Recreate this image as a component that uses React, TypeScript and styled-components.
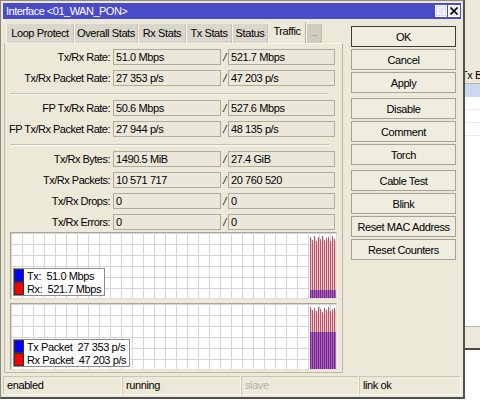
import React from "react";
import styled, { createGlobalStyle } from "styled-components";

const GlobalStyle = createGlobalStyle`
  html, body {
    margin: 0;
    padding: 0;
    background: #ffffff;
  }
  body {
    font-family: "Liberation Sans", Arial, sans-serif;
    font-size: 11px;
    letter-spacing: -0.4px;
    color: #000;
  }
`;

const panelBg = "#ece9d8";

const Desktop = styled.div`
  position: relative;
  width: 480px;
  height: 415px;
  overflow: hidden;
  background: #fff;
`;

/* window behind, only a strip shows on the right */
const BackWindow = styled.div`
  position: absolute;
  left: 330px;
  top: 0;
  width: 150px;
  height: 350px;
  box-sizing: border-box;
  background: ${panelBg};
  border-bottom: 2px solid #4a4a4a;
  display: flex;
  flex-direction: column;
`;

const BackTop = styled.div`
  height: 67px;
`;

const ListHeader = styled.div`
  height: 16px;
  line-height: 16px;
  padding-left: 131px;
  border-bottom: 1px solid #b8b5a8;
  white-space: nowrap;
  overflow: hidden;
`;

const ListRow = styled.div<{ $selected?: boolean }>`
  height: 12px;
  background: ${(p) => (p.$selected ? "#c9d9f2" : "#fff")};
  border-bottom: 1px solid ${(p) => (p.$selected ? "#c9d9f2" : "#ececec")};
`;

const ListFill = styled.div`
  flex: 1;
  background: #fff;
`;

const BackFooter = styled.div`
  height: 21px;
  border-top: 1px solid #b8b5a8;
`;

const Window = styled.div`
  position: absolute;
  left: 0;
  top: 0;
  width: 465px;
  height: 399px;
  box-sizing: border-box;
  background: ${panelBg};
  border: 1px solid #8a8880;
  border-right: 2px solid #505050;
  border-bottom: 2px solid #505050;
  padding: 2px;
  display: flex;
  flex-direction: column;
`;

const TitleBar = styled.div`
  flex-shrink: 0;
  height: 16px;
  background: #4a4bc6;
  color: #fff;
  display: flex;
  align-items: center;
  justify-content: space-between;
  padding: 0 1px 0 3px;
`;

const TitleText = styled.span`
  letter-spacing: -0.5px;
`;

const TitleButtons = styled.div`
  display: flex;
  gap: 1px;
`;

const TitleButton = styled.div<{ $close?: boolean }>`
  width: 12px;
  height: 12px;
  box-sizing: border-box;
  background: ${(p) => (p.$close ? "#f2f2f2" : "#d6d6e4")};
  border: 1px solid #fff;
  display: flex;
  align-items: center;
  justify-content: center;
`;

const MaxSquare = styled.div`
  width: 8px;
  height: 8px;
  box-sizing: border-box;
  border: 1px solid #fff;
  background: #e8e8f0;
`;

const Body = styled.div`
  display: flex;
  margin-top: 3px;
  flex: 1;
  min-height: 0;
`;

const LeftPane = styled.div`
  width: 339px;
  margin-left: 1px;
  display: flex;
  flex-direction: column;
`;

const TabStrip = styled.div`
  flex-shrink: 0;
  display: flex;
  align-items: flex-end;
  height: 21px;
  padding-left: 2px;
`;

const Tab = styled.div<{ $w: number; $active?: boolean; $more?: boolean }>`
  width: ${(p) => p.$w}px;
  box-sizing: border-box;
  height: ${(p) => (p.$active ? 21 : 19)}px;
  line-height: 19px;
  text-align: center;
  background: ${(p) => (p.$active ? panelBg : p.$more ? "#cfccc0" : "#d9d6cb")};
  border-left: 1px solid #f4f3ec;
  border-right: 1px solid ${(p) => (p.$active ? "#b5b2a6" : "#c4c1b5")};
  color: ${(p) => (p.$more ? "#8a8880" : "#000")};
  font-size: ${(p) => (p.$more ? "9px" : "11px")};
  white-space: nowrap;
`;

const TabPanel = styled.div`
  flex: 1;
  min-height: 0;
  border: 1px solid #b9b6a9;
  border-top-color: #f7f6f0;
  padding: 5px 0 0 1px;
  display: flex;
  flex-direction: column;
`;

const Form = styled.div`
  display: grid;
  grid-template-columns: 107px 108px 7px 107px;
  row-gap: 5px;
  align-items: center;
`;

const Label = styled.div`
  text-align: right;
  padding-right: 3px;
  white-space: nowrap;
  line-height: 16px;
  letter-spacing: -0.5px;
`;

const Field = styled.div`
  height: 16px;
  box-sizing: border-box;
  border: 1px solid #aeab9f;
  background: #ebe8db;
  padding-left: 2px;
  line-height: 14px;
  white-space: nowrap;
`;

const Slash = styled.div`
  text-align: center;
  font-style: italic;
  color: #222;
  line-height: 16px;
`;

const Rule = styled.div`
  grid-column: 1 / -1;
  height: 2px;
  margin: 2px 6px 0 4px;
  border-top: 1px solid #c5c2b5;
  border-bottom: 1px solid #fbfaf5;
  box-sizing: border-box;
`;

const Graphs = styled.div`
  display: flex;
  flex-direction: column;
  gap: 4px;
  margin: 2px 0 0 4px;
`;

const Graph = styled.div`
  position: relative;
  width: 327px;
  height: 67px;
  box-sizing: border-box;
  border: 1px solid #a9a699;
  border-right-color: #e0ded4;
  border-bottom-color: #e0ded4;
  background-color: #fff;
  background-image: linear-gradient(to right, #d6d6d6 1px, transparent 1px),
    linear-gradient(to bottom, #d6d6d6 1px, transparent 1px);
  background-size: 11px 11px;
`;

const Bars = styled.svg`
  position: absolute;
  right: 0;
  top: 0;
`;

const Legend = styled.div`
  position: absolute;
  left: 2px;
  bottom: 2px;
  background: #fff;
  border: 1px solid #8c8c8c;
  padding-right: 3px;
  display: flex;
  flex-direction: column;
`;

const LegendItem = styled.div`
  display: flex;
  align-items: center;
  height: 13px;
  white-space: pre;
`;

const Swatch = styled.span<{ $color: string }>`
  width: 10px;
  height: 13px;
  box-sizing: border-box;
  background: ${(p) => p.$color};
  border: 1px solid #333;
  margin-right: 3px;
`;

const RightPane = styled.div`
  display: flex;
  flex-direction: column;
  gap: 2px;
  padding: 4px 0 0 8px;
`;

const Button = styled.div<{ $default?: boolean; $groupStart?: boolean }>`
  width: 105px;
  height: 21px;
  box-sizing: border-box;
  border: 1px solid ${(p) => (p.$default ? "#3c3c3c" : "#a5a398")};
  background: #efece0;
  display: flex;
  align-items: center;
  justify-content: center;
  margin-top: ${(p) => (p.$groupStart ? 3 : 0)}px;
  white-space: nowrap;
`;

const StatusBar = styled.div`
  flex-shrink: 0;
  display: grid;
  grid-template-columns: 119px 119px 118px 1fr;
  height: 19px;
  margin-top: 3px;
`;

const StatusCell = styled.div<{ $muted?: boolean }>`
  box-sizing: border-box;
  border: 1px solid #c9c6b9;
  border-right-color: #faf9f4;
  border-bottom-color: #faf9f4;
  padding-left: 3px;
  line-height: 17px;
  color: ${(p) => (p.$muted ? "#b4b2aa" : "#000")};
`;

const tabs = [
  { label: "Loop Protect", w: 68 },
  { label: "Overall Stats", w: 64 },
  { label: "Rx Stats", w: 48 },
  { label: "Tx Stats", w: 46 },
  { label: "Status", w: 36 },
  { label: "Traffic", w: 38, active: true },
];

type Row = { label: string; tx: string; rx: string } | "rule";

const rows: Row[] = [
  { label: "Tx/Rx Rate:", tx: "51.0 Mbps", rx: "521.7 Mbps" },
  { label: "Tx/Rx Packet Rate:", tx: "27 353 p/s", rx: "47 203 p/s" },
  "rule",
  { label: "FP Tx/Rx Rate:", tx: "50.6 Mbps", rx: "527.6 Mbps" },
  { label: "FP Tx/Rx Packet Rate:", tx: "27 944 p/s", rx: "48 135 p/s" },
  "rule",
  { label: "Tx/Rx Bytes:", tx: "1490.5 MiB", rx: "27.4 GiB" },
  { label: "Tx/Rx Packets:", tx: "10 571 717", rx: "20 760 520" },
  { label: "Tx/Rx Drops:", tx: "0", rx: "0" },
  { label: "Tx/Rx Errors:", tx: "0", rx: "0" },
];

const buttons = [
  { label: "OK", def: true },
  { label: "Cancel" },
  { label: "Apply" },
  { label: "Disable", group: true },
  { label: "Comment" },
  { label: "Torch" },
  { label: "Cable Test", group: true },
  { label: "Blink" },
  { label: "Reset MAC Address" },
  { label: "Reset Counters" },
];

// a burst of bars at the right end of the graph
const BarBurst: React.FC<{ tops: number[]; split: number }> = ({ tops, split }) => {
  const h = 65;
  const w = 27;
  return (
    <Bars width={w} height={h} viewBox={`0 0 ${w} ${h}`}>
      {tops.map((t, i) => {
        const x = 1 + i * 2;
        return (
          <g key={i}>
            <rect x={x + 1} y={t + 2} width={1} height={split - t - 2} fill="#efc3ca" />
            <rect x={x} y={t} width={1} height={split - t} fill="#b45a6c" />
            <rect x={x + 1} y={split} width={1} height={h - split} fill="#aa66bc" />
            <rect x={x} y={split} width={1} height={h - split} fill="#74278c" />
          </g>
        );
      })}
    </Bars>
  );
};

export default function App() {
  return (
    <Desktop>
      <GlobalStyle />
      <BackWindow>
        <BackTop />
        <ListHeader>Tx B</ListHeader>
        <ListRow $selected />
        <ListRow />
        <ListRow />
        <ListRow />
        <ListFill />
        <BackFooter />
      </BackWindow>

      <Window>
        <TitleBar>
          <TitleText>Interface &lt;01_WAN_PON&gt;</TitleText>
          <TitleButtons>
            <TitleButton>
              <MaxSquare />
            </TitleButton>
            <TitleButton $close>
              <svg width="8" height="8" viewBox="0 0 8 8">
                <path d="M0.5 0.5 L7.5 7.5 M7.5 0.5 L0.5 7.5" stroke="#000" strokeWidth="1.6" />
              </svg>
            </TitleButton>
          </TitleButtons>
        </TitleBar>

        <Body>
          <LeftPane>
            <TabStrip>
              {tabs.map((t) => (
                <Tab key={t.label} $w={t.w} $active={t.active}>
                  {t.label}
                </Tab>
              ))}
              <Tab $w={16} $more>
                ...
              </Tab>
            </TabStrip>
            <TabPanel>
              <Form>
                {rows.map((r, i) =>
                  r === "rule" ? (
                    <Rule key={i} />
                  ) : (
                    <React.Fragment key={i}>
                      <Label>{r.label}</Label>
                      <Field>{r.tx}</Field>
                      <Slash>/</Slash>
                      <Field>{r.rx}</Field>
                    </React.Fragment>
                  )
                )}
              </Form>
              <Graphs>
                <Graph>
                  <BarBurst tops={[4, 7, 3, 8, 4, 6, 3, 7, 5, 4, 8, 3, 6]} split={57} />
                  <Legend>
                    <LegendItem>
                      <Swatch $color="#0000ff" />
                      {"Tx:  51.0 Mbps"}
                    </LegendItem>
                    <LegendItem>
                      <Swatch $color="#ff0000" />
                      {"Rx:  521.7 Mbps"}
                    </LegendItem>
                  </Legend>
                </Graph>
                <Graph>
                  <BarBurst tops={[3, 6, 4, 7, 3, 5, 8, 4, 6, 3, 7, 5, 4]} split={28} />
                  <Legend>
                    <LegendItem>
                      <Swatch $color="#0000ff" />
                      {"Tx Packet  27 353 p/s"}
                    </LegendItem>
                    <LegendItem>
                      <Swatch $color="#ff0000" />
                      {"Rx Packet  47 203 p/s"}
                    </LegendItem>
                  </Legend>
                </Graph>
              </Graphs>
            </TabPanel>
          </LeftPane>

          <RightPane>
            {buttons.map((b) => (
              <Button key={b.label} $default={b.def} $groupStart={b.group}>
                {b.label}
              </Button>
            ))}
          </RightPane>
        </Body>

        <StatusBar>
          <StatusCell>enabled</StatusCell>
          <StatusCell>running</StatusCell>
          <StatusCell $muted>slave</StatusCell>
          <StatusCell>link ok</StatusCell>
        </StatusBar>
      </Window>
    </Desktop>
  );
}
